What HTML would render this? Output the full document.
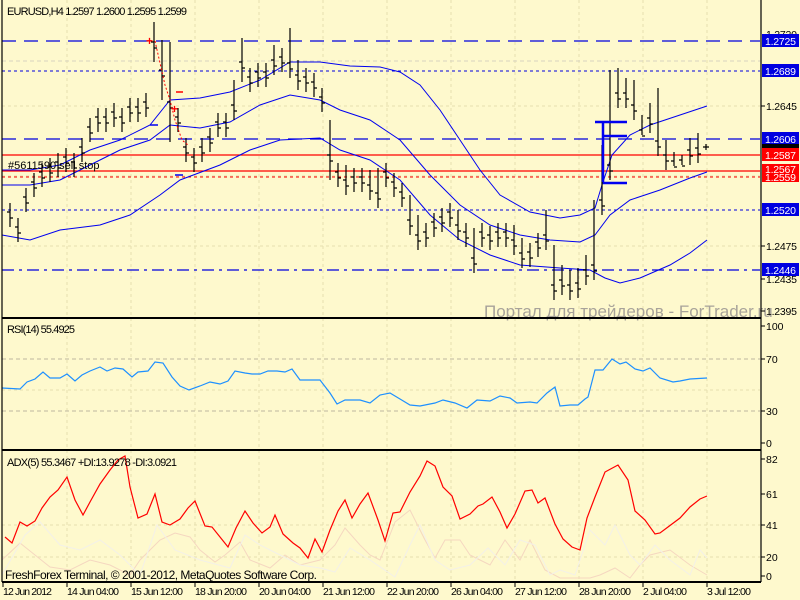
<!DOCTYPE html>
<html><head><meta charset="utf-8"><style>
html,body{margin:0;padding:0;background:#FEF9CD;}
svg{display:block;font-family:"Liberation Sans",sans-serif;}
</style></head><body>
<svg width="800" height="600" viewBox="0 0 800 600" xmlns="http://www.w3.org/2000/svg">
<rect width="800" height="600" fill="#FEF9CD"/>
<g stroke="#E6DFB0" stroke-dasharray="3,3" stroke-width="1">
<path d="M67 0V582M131 0V582M195 0V582M259 0V582M323 0V582M387 0V582M451 0V582M515 0V582M579 0V582M643 0V582M707 0V582"/>
<path d="M2 106H760M2 176H760M2 246H760M2 390H760M2 525H760M2 557H760"/>
</g>
<g stroke="#BDB8A0" stroke-dasharray="4,3"><path d="M2 359H760M2 411H760"/><path d="M2 61H760" stroke="#D8D4C0"/></g>
<path d="M2 41H760" stroke="#0000E0" stroke-width="1.3" stroke-dasharray="14,8"/>
<path d="M2 71H760" stroke="#0000E0" stroke-dasharray="3,3"/>
<path d="M2 139H760" stroke="#0000E0" stroke-width="1.3" stroke-dasharray="14,8"/>
<path d="M2 155H760M2 171H760" stroke="#FF0000" stroke-width="1.3"/>
<path d="M2 177H760" stroke="#FF0000" stroke-dasharray="3,3"/>
<path d="M2 210H760" stroke="#0000E0" stroke-dasharray="3,3"/>
<path d="M2 270H760" stroke="#0000E0" stroke-width="1.3" stroke-dasharray="12,5,3,5"/>
<g fill="none" stroke="#0000F0" stroke-width="1">
<polyline points="2,170 30,170 60,165 90,150 120,140 150,125 170,100 200,98 230,92 260,80 290,62 320,62 350,66 380,67 400,72 420,85 440,110 460,140 480,170 500,195 530,212 560,218 580,215 595,208 602,185 612,155 630,135 650,125 680,115 707,106"/>
<polyline points="2,185 30,185 60,180 90,165 120,150 150,140 170,125 200,128 230,122 260,105 290,95 320,100 340,110 370,120 400,140 430,175 460,205 490,225 520,235 550,240 580,242 595,235 610,215 630,200 660,190 690,178 707,172"/>
<polyline points="2,235 30,240 60,230 100,225 130,215 160,195 180,180 220,165 250,150 280,140 320,138 340,150 370,160 400,180 430,215 460,240 490,255 520,265 560,268 590,270 605,278 620,283 640,278 670,265 690,253 707,240"/>
</g>
<path stroke="#000" stroke-width="1.2" fill="none" d="
M10 203v24m0-15h-3m3 6h3 M18 218v24m0-15h-3m3 6h3 M26 188v24m0-15h-3m3 6h3 M34 173v24m0-15h-3m3 6h3 M42 163v24m0-15h-3m3 6h3
M50 158v24m0-15h-3m3 6h3 M58 153v24m0-15h-3m3 6h3 M66 148v24m0-15h-3m3 6h3 M74 153v24m0-15h-3m3 6h3 M82 138v24m0-15h-3m3 6h3
M90 118v24m0-15h-3m3 6h3 M98 108v24m0-15h-3m3 6h3 M106 108v24m0-15h-3m3 6h3 M114 103v24m0-15h-3m3 6h3 M122 108v24m0-15h-3m3 6h3
M130 98v24m0-15h-3m3 6h3 M138 98v24m0-15h-3m3 6h3 M146 93v24m0-15h-3m3 6h3 M154 22v40m0-20h-3m3 6h3 M162 40v60m0-30h-3m3 6h3
M170 42v100m0-40h-3m3 6h3 M178 108v24m0-15h-3m3 6h3 M186 138v24m0-15h-3m3 6h3 M194 148v24m0-15h-3m3 6h3 M202 138v24m0-15h-3m3 6h3
M210 128v24m0-15h-3m3 6h3 M218 113v24m0-15h-3m3 6h3 M226 113v24m0-15h-3m3 6h3 M234 80v40m0-15h-3m3 6h3 M242 38v44m0-20h-3m3 6h3
M250 68v24m0-15h-3m3 6h3 M258 63v24m0-15h-3m3 6h3 M266 63v24m0-15h-3m3 6h3 M274 45v30m0-15h-3m3 6h3 M282 48v24m0-15h-3m3 6h3
M290 28v50m0-15h-3m3 6h3 M298 60v30m0-15h-3m3 6h3 M306 68v24m0-15h-3m3 6h3 M314 73v24m0-15h-3m3 6h3 M322 88v24m0-15h-3m3 6h3
M330 120v60m0-25h-3m3 6h3 M338 163v24m0-15h-3m3 6h3 M346 165v30m0-15h-3m3 6h3 M354 168v24m0-15h-3m3 6h3 M362 168v24m0-15h-3m3 6h3
M370 170v30m0-15h-3m3 6h3 M378 168v40m0-15h-3m3 6h3 M386 163v24m0-15h-3m3 6h3 M394 173v24m0-15h-3m3 6h3 M402 183v24m0-15h-3m3 6h3
M410 195v40m0-15h-3m3 6h3 M418 215v35m0-15h-3m3 6h3 M426 223v24m0-15h-3m3 6h3 M434 213v24m0-15h-3m3 6h3 M442 208v24m0-15h-3m3 6h3
M450 203v24m0-15h-3m3 6h3 M458 210v30m0-15h-3m3 6h3 M466 223v24m0-15h-3m3 6h3 M474 228v45m0-15h-3m3 6h3 M482 223v24m0-15h-3m3 6h3
M490 226v24m0-15h-3m3 6h3 M498 223v24m0-15h-3m3 6h3 M506 223v24m0-15h-3m3 6h3 M514 225v30m0-15h-3m3 6h3 M522 238v30m0-15h-3m3 6h3
M530 243v24m0-15h-3m3 6h3 M538 233v24m0-15h-3m3 6h3 M546 210v40m0-15h-3m3 6h3 M554 245v55m0-15h-3m3 6h3 M562 265v30m0-15h-3m3 6h3
M570 270v30m0-15h-3m3 6h3 M578 268v30m0-15h-3m3 6h3 M586 255v30m0-15h-3m3 6h3 M594 200v80m0-15h-3m3 6h3 M602 145v70m0-15h-3m3 6h3
M610 70v110m0-15h-3m3 6h3 M618 68v40m0-15h-3m3 6h3 M626 78v30m0-15h-3m3 6h3 M634 80v40m0-15h-3m3 6h3 M642 115v20m0-5h-3m3 6h3
M650 103v30m0-15h-3m3 6h3 M658 88v68m0-15h-3m3 6h3 M666 140v30m0-15h-3m3 6h3 M674 152v14m0-5h-3m3 6h3 M682 155v10m0-5h-3m3 6h3
M690 138v27m0-15h-3m3 6h3 M698 133v30m0-15h-3m3 6h3 M706 144v6m0-3h-3m3 0h3"/>
<path d="M155 41L160 63L165 85L170 100L175 120L182 140L188 145" stroke="#FF0000" stroke-dasharray="2,2" fill="none"/>
<text x="146" y="45" font-size="12" fill="#FF0000" font-weight="bold">+</text>
<text x="171" y="113" font-size="12" fill="#FF0000" font-weight="bold">+</text>
<path d="M176 92h7" stroke="#FF0000" stroke-width="1.5"/>
<path d="M150 125h8M175 175h8" stroke="#0000F0" stroke-width="1.5"/>
<path d="M595 122h32M603 136h24M603 183h24M603 122v60" stroke="#0000F0" stroke-width="2.5" fill="none"/>
<text x="8" y="169" font-size="11" fill="#000">#5611590 sell stop</text>
<text x="484" y="317" font-size="17" fill="#A8A39A">Портал для трейдеров - ForTrader.ru</text>
<polyline fill="none" stroke="#1E90FF" stroke-width="1.2" points="2,388 20,389 27,382 35,379 43,372 50,378 60,378 67,374 75,381 82,375 90,371 100,367 107,371 115,368 123,369 132,377 138,372 148,371 155,362 163,363 172,377 180,386 189,390 200,386 210,382 220,384 228,381 235,371 245,373 252,374 260,374 268,371 277,371 285,372 292,369 300,380 320,380 330,393 337,404 345,400 360,400 370,403 380,395 390,393 400,399 410,405 420,406 435,403 443,400 455,403 467,408 477,400 490,401 500,396 510,398 517,403 530,402 537,403 547,393 555,387 560,406 570,405 578,405 585,399 588,397 595,370 603,370 612,359 620,364 626,362 635,369 643,371 650,368 660,378 673,382 680,381 690,379 707,378"/>
<polyline fill="none" stroke="#F5D7C0" points="2,560 20,543 35,555 50,567 70,570 90,560 110,565 130,575 140,560 160,540 175,533 190,537 200,550 215,562 225,555 240,542 250,560 270,568 285,555 300,565 320,560 335,545 345,528 360,545 370,555 380,560 395,522 410,510 425,540 435,558 445,540 460,540 470,555 480,560 490,565 505,540 520,560 530,540 545,570 560,578 590,578 600,575 615,568 630,578 640,565 650,555 670,550 690,565 707,575"/>
<polyline fill="none" stroke="#F3F0E8" points="2,575 25,535 40,522 60,545 80,550 100,540 120,555 140,575 157,525 175,550 200,560 230,568 245,535 260,545 280,555 300,565 320,568 335,572 350,548 370,560 395,577 410,545 420,525 435,560 450,570 470,565 488,548 505,565 520,540 535,545 550,575 560,570 575,575 590,530 605,545 615,525 630,555 640,565 655,545 670,560 690,575 700,550 707,558"/>
<polyline fill="none" stroke="#FF0000" stroke-width="1.2" points="5,537 12,543 20,522 27,526 35,521 42,508 50,497 58,490 67,477 75,500 83,515 90,502 100,484 110,470 118,460 125,456 130,487 138,518 147,514 155,494 162,522 170,525 180,519 188,508 195,501 205,526 212,527 220,537 228,547 236,528 245,511 253,523 262,533 270,527 275,515 283,534 293,543 300,548 308,558 315,539 322,552 330,530 338,511 345,500 352,518 360,504 368,493 378,520 385,541 393,513 400,512 410,492 420,476 427,461 435,466 443,487 452,496 460,519 470,514 478,506 483,504 492,497 500,512 507,528 515,514 525,491 532,490 538,503 545,498 555,524 563,539 572,547 580,550 587,518 595,497 605,472 618,465 628,480 635,511 645,520 655,534 660,533 668,527 680,518 690,507 700,499 707,496"/>
<g stroke="#000" fill="none">
<path d="M2 0V582M761 0V582" stroke-width="1.2"/>
<path d="M2 318H761M2 450H761M2 582H761" stroke-width="2"/>
</g>
<path d="M761 106h4M761 246h4M761 279h4M761 311h4M761 326h4M761 359h4M761 411h4M761 443h4M761 459h4M761 494h4M761 525h4M761 557h4M761 576h4" stroke="#000"/>
<path d="M3 582v5M67 582v5M131 582v5M195 582v5M259 582v5M323 582v5M387 582v5M451 582v5M515 582v5M579 582v5M643 582v5M707 582v5" stroke="#000"/>
<g font-size="10.5" fill="#000">
<text x="766" y="38" textLength="31">1.2720</text>
<text x="766" y="110" textLength="31">1.2645</text>
<text x="766" y="250" textLength="31">1.2475</text>
<text x="766" y="283" textLength="31">1.2435</text>
<text x="766" y="315" textLength="31">1.2395</text>
<text x="766" y="330">100</text>
<text x="766" y="363">70</text>
<text x="766" y="415">30</text>
<text x="766" y="447">0</text>
<text x="766" y="463">82</text>
<text x="766" y="498">61</text>
<text x="766" y="529">41</text>
<text x="766" y="561">20</text>
<text x="766" y="580">0</text>
</g>
<g font-size="10.5" fill="#fff">
<rect x="762" y="34" width="37" height="13" fill="#0000E0"/><text x="765" y="45" textLength="31">1.2725</text>
<rect x="762" y="64" width="37" height="13" fill="#0000E0"/><text x="765" y="75" textLength="31">1.2689</text>
<rect x="762" y="132" width="37" height="13" fill="#0000E0"/><text x="765" y="143" textLength="31">1.2606</text>
<rect x="762" y="144" width="37" height="5" fill="#000"/>
<rect x="762" y="148" width="37" height="13" fill="#FF0000"/><text x="765" y="159" textLength="31">1.2587</text>
<rect x="762" y="164" width="37" height="18" fill="#FF0000"/><text x="765" y="173" textLength="31">1.2567</text><text x="765" y="181" textLength="31">1.2559</text>
<rect x="762" y="203" width="37" height="13" fill="#0000E0"/><text x="765" y="214" textLength="31">1.2520</text>
<rect x="762" y="263" width="37" height="13" fill="#0000E0"/><text x="765" y="274" textLength="31">1.2446</text>
</g>
<g font-size="11" fill="#000">
<text x="7" y="15" textLength="180">EURUSD,H4  1.2597 1.2600 1.2595 1.2599</text>
<text x="7" y="333" textLength="68">RSI(14) 55.4925</text>
<text x="7" y="466" textLength="170">ADX(5) 55.3467 +DI:13.9278 -DI:3.0921</text>
<text x="5" y="579" font-size="12" textLength="312">FreshForex Terminal, © 2001-2012, MetaQuotes Software Corp.</text>
</g>
<g font-size="10.5" fill="#000">
<text x="3" y="595" textLength="49">12 Jun 2012</text>
<text x="67" y="595" textLength="52">14 Jun 04:00</text>
<text x="131" y="595" textLength="52">15 Jun 12:00</text>
<text x="195" y="595" textLength="52">18 Jun 20:00</text>
<text x="259" y="595" textLength="52">20 Jun 04:00</text>
<text x="323" y="595" textLength="52">21 Jun 12:00</text>
<text x="387" y="595" textLength="52">22 Jun 20:00</text>
<text x="451" y="595" textLength="52">26 Jun 04:00</text>
<text x="515" y="595" textLength="52">27 Jun 12:00</text>
<text x="579" y="595" textLength="52">28 Jun 20:00</text>
<text x="643" y="595" textLength="44">2 Jul 04:00</text>
<text x="707" y="595" textLength="44">3 Jul 12:00</text>
</g>
</svg>
</body></html>
